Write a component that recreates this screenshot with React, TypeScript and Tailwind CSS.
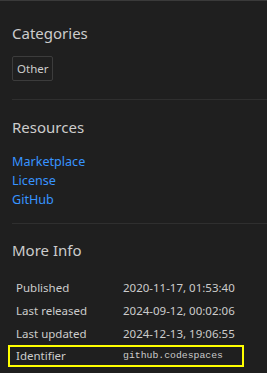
const rows = [
  { label: 'Published', value: '2020-11-17, 01:53:40' },
  { label: 'Last released', value: '2024-09-12, 00:02:06' },
  { label: 'Last updated', value: '2024-12-13, 19:06:55' },
];

export default function App() {
  return (
    <div className="w-[267px] h-[373px] overflow-hidden bg-[#1f1f1f] text-[#cccccc] border-t border-[#3a3a3a] font-['Segoe_UI','Noto_Sans',sans-serif]">
      <div className="pl-3">
        <section className="pt-[21px] pb-[18px] border-b border-[#2f2f2f]">
          <h2 className="text-[15px] leading-[22px]">Categories</h2>
          <div className="mt-[12px] flex">
            <span className="inline-block border border-[#3c3c3c] rounded-[2px] px-[4px] h-[25px] leading-[23px] text-[11.5px]">
              Other
            </span>
          </div>
        </section>

        <section className="pt-[16px] pb-[14px] border-b border-[#2f2f2f]">
          <h2 className="text-[15px] leading-[22px]">Resources</h2>
          <div className="mt-[14px] flex flex-col text-[12.6px] leading-[19px] text-[#3794ff]">
            <a>Marketplace</a>
            <a>License</a>
            <a>GitHub</a>
          </div>
        </section>

        <section className="pt-[15px]">
          <h2 className="text-[15px] leading-[22px]">More Info</h2>
          <div className="mt-[15px] text-[11.5px]">
            {rows.map((r) => (
              <div key={r.label} className="flex h-[23px] items-center">
                <div className="w-[111px] pl-1">{r.label}</div>
                <div>{r.value}</div>
              </div>
            ))}
            <div className="flex h-[22px] items-center border-2 border-[#ffff00] -ml-[4px] w-[236px]">
              <div className="w-[113px] pl-[6px]">Identifier</div>
              <div className="font-mono text-[9.8px] leading-[14px]">github.codespaces</div>
            </div>
          </div>
        </section>
      </div>
    </div>
  );
}
